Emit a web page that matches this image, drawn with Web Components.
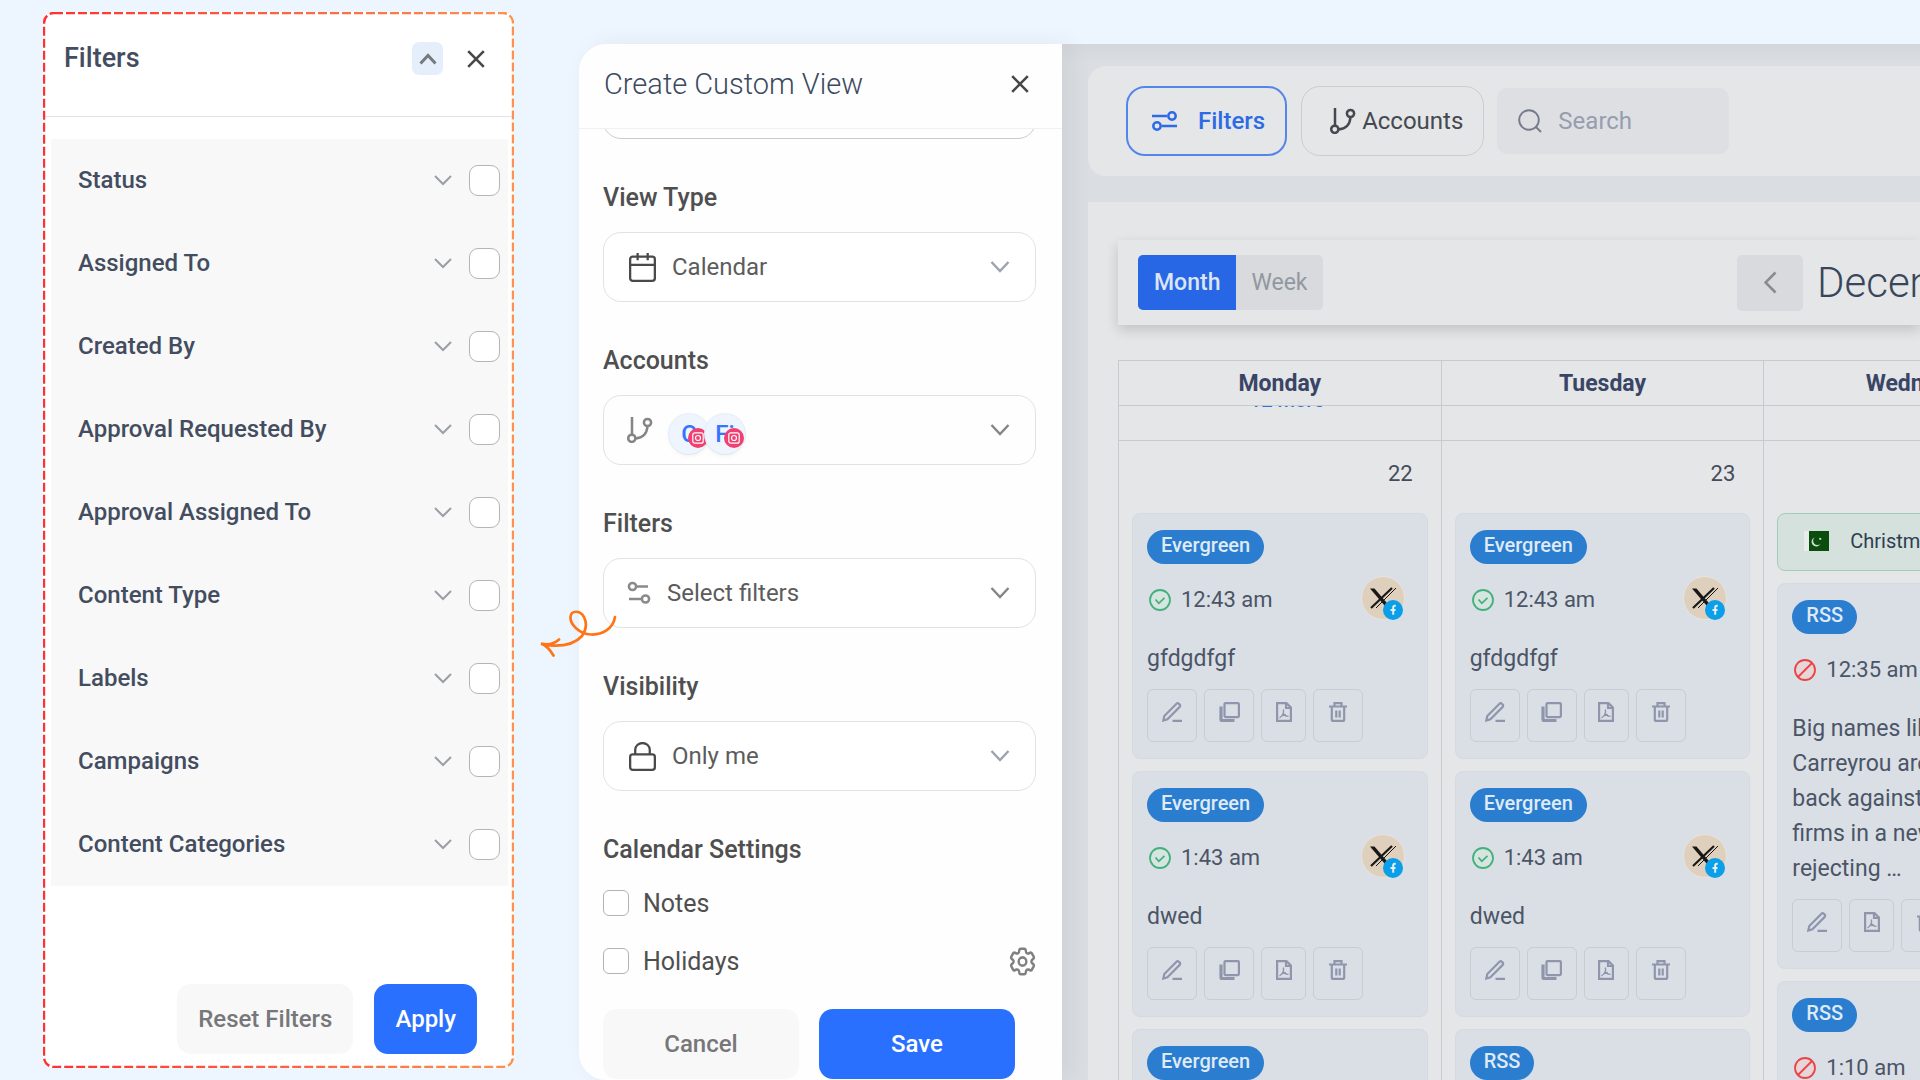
<!DOCTYPE html>
<html lang="en">
<head>
<meta charset="utf-8">
<title>Create Custom View</title>
<style>
  html, body { height: 100%; }
  body { margin: 0; overflow: hidden; background: #edf5ff; font-family: Roboto, "Liberation Sans", sans-serif; color: #434d5f; }
</style>
</head>
<body>
<planner-page></planner-page>

<script>
const define = (name, html, setup) => {
  const tpl = document.createElement('template');
  tpl.innerHTML = `<style>
    *, *::before, *::after { box-sizing: border-box; }
    button, input, select { font: inherit; color: inherit; margin: 0; padding: 0; border: 0; background: none; }
    svg { display: block; flex: none; }
  </style>` + html;
  customElements.define(name, class extends HTMLElement {
    constructor() {
      super();
      this.attachShadow({ mode: 'open' }).append(tpl.content.cloneNode(true));
    }
    connectedCallback() {
      if (setup && !this.ready) { this.ready = true; setup(this, this.shadowRoot); }
    }
  });
};

/* name: [width, height, viewBox, stroke width, markup] */
const ICONS = {
  up: [18, 12, '0 0 18 12', 3, '<path d="M1.500 10.500L9 2.500l7.500 8"/>'],
  down: [18, 11, '0 0 18 11', 2, '<path d="M1 1l8 8 8-8"/>'],
  downThick: [20, 12, '0 0 20 12', 2.4, '<path d="M1.500 1l8.500 9L18.500 1"/>'],
  left: [13, 23, '0 0 13 23', 2.6, '<path d="M11.500 1.500l-10 10 10 10"/>'],
  close: [18, 18, '0 0 18 18', 2.6, '<path d="M1.200 1.200l15.600 15.600M16.800 1.200L1.200 16.800"/>'],
  calendar: [27, 29, '0 0 26 28', 2.2, '<rect x="1.100" y="3.500" width="23.800" height="23.400" rx="2.500"/><path d="M1 11.500h24M8.300 0v7M18 0v7"/>'],
  lock: [27, 29, '0 0 26 28', 2.2, '<rect x="1.100" y="12" width="23.800" height="14.900" rx="2.500"/><path d="M6 12V7.500a7 6.500 0 0 1 14 0V12"/>'],
  branch: [26, 26, '0 0 26 26', 2.5, '<path d="M5 0v17M20.500 9c-.5 7-4.500 12-12 12.500"/><circle cx="4.800" cy="21.300" r="3.600"/><circle cx="20.500" cy="5.500" r="3.600"/>'],
  sliders: [24, 24, '0 0 24 24', 2.5, '<path d="M9 5.500h12M2 18h12"/><circle cx="5.500" cy="5.500" r="3.600"/><circle cx="18.500" cy="18" r="3.600"/>'],
  slidersAlt: [25, 20, '0 0 25 20', 2.5, '<path d="M0 5h15M10 15h15"/><circle cx="20" cy="5" r="3.700"/><circle cx="5" cy="15" r="3.700"/>'],
  search: [24, 24, '0 0 24 24', 1.9, '<circle cx="11" cy="11" r="9.800"/><path d="M17.500 17.500l5.500 5.500"/>'],
  gear: [27, 29, '1.800 1.800 20.400 20.400', 1.8, '<path d="M9.594 3.940c.09-.542.56-.94 1.110-.94h2.593c.55 0 1.020.398 1.110.94l.213 1.281c.063.374.313.686.645.87.074.04.147.083.22.127.324.196.72.257 1.075.124l1.217-.456a1.125 1.125 0 011.370.49l1.296 2.247a1.125 1.125 0 01-.26 1.431l-1.003.827c-.293.24-.438.613-.431.992a6.759 6.759 0 010 .255c-.007.378.138.75.43.99l1.005.828c.424.35.534.954.26 1.430l-1.298 2.247a1.125 1.125 0 01-1.369.491l-1.217-.456c-.355-.133-.75-.072-1.076.124a6.570 6.570 0 01-.22.128c-.331.183-.581.495-.644.869l-.213 1.280c-.09.543-.56.941-1.110.941h-2.594c-.55 0-1.020-.398-1.110-.94l-.213-1.281c-.062-.374-.312-.686-.644-.87a6.520 6.520 0 01-.22-.127c-.325-.196-.72-.257-1.076-.124l-1.217.456a1.125 1.125 0 01-1.369-.49l-1.297-2.247a1.125 1.125 0 01.26-1.431l1.004-.827c.292-.24.437-.613.43-.992a6.932 6.932 0 010-.255c.007-.378-.138-.75-.43-.99l-1.004-.828a1.125 1.125 0 01-.26-1.430l1.297-2.247a1.125 1.125 0 011.370-.491l1.216.456c.356.133.751.072 1.076-.124.072-.044.146-.087.22-.128.332-.183.582-.495.644-.869l.214-1.281z"/><circle cx="12" cy="12" r="2.900"/>'],
  edit: [20, 20, '0 0 20 20', 2.2, '<path d="M1.300 18.500l1-4.500L14.500 1.700a1.600 1.600 0 0 1 2.300 0l.9.9a1.600 1.600 0 0 1 0 2.300L5.400 17.200zM10.500 18.800H20"/>'],
  copy: [21, 20, '0 0 21 20', 2.2, '<rect x="5.500" y="1.100" width="14.400" height="14" rx="1"/><path d="M2 4.500v13.200q0 .8.800.8h12.700" stroke-width="3.200"/>'],
  pdf: [16, 20, '0 0 16 20', 2.2, '<path d="M1.100 1.100h9.400l4.400 4.400v13.400H1.100z"/><path d="M10 1v5h5"/><path d="M7.300 7.500c1 3.500-1 6.500-3.800 8.500M7.500 12c1.500 2 3 2.500 5 2.300M5.500 13.700l4.500-.9" stroke-width="1.400"/>'],
  trash: [18, 20, '0 0 18 20', 2.2, '<path d="M0 4.500h18M5.500 4V1.100h7V4M2.800 5v12.400q0 1.500 1.500 1.500h9.400q1.500 0 1.500-1.500V5M7.300 8.500v7M10.700 8.500v7"/>'],
  ok: [22, 22, '0 0 22 22', 1.8, '<circle cx="11" cy="11" r="10" fill="#d6e5df"/><path d="M6.500 10.500l3.300 3.800 5.700-5.500"/>'],
  failed: [22, 22, '0 0 22 22', 1.8, '<circle cx="11" cy="11" r="10" fill="#e6d6d9"/><path d="M4 18L18 4"/>'],
  flag: [25, 20, '0 0 25 20', 0, '<path fill="#e9ecea" d="M0 0h5v20H0z"/><path fill="#0b4d0d" d="M5 0h20v20H5z"/><path fill="#cfdccf" d="M10.500 6.500a4.700 4.700 0 1 0 6 6.300 4.300 4.300 0 0 1-6-6.300zM15.500 6.800l1.500.3.500 1.200-1.200.8-1.300-.8z"/>'],
  arrow: [78, 48, '0 0 78 48', 2.7, '<path stroke-linecap="round" d="M76 8c-2 12-13 18-24 17.500C40 25 31 15 31.500 8 32 1 41 1 45 8c3 6 2 13-2 19C35 36 21 38 5 36M20 30.500C15 35 8 36 2 34.500c5 2 9 6 12.500 12"/>'],
};

define('ui-icon', `<style>:host { display: block; flex: none; }</style><div></div>`, (el, root) => {
  const [w, h, vb, sw, body] = ICONS[el.getAttribute('name')];
  root.querySelector('div').innerHTML =
    `<svg width="${w}" height="${h}" viewBox="${vb}" preserveAspectRatio="none" fill="none" stroke="currentColor" stroke-width="${sw}" aria-hidden="true">${body}</svg>`;
});

define('ui-button', `<style>
  :host { display: block; --bg: #f8f8f8; --fg: #77777a; }
  :host([primary]) { --bg: #2a70ff; --fg: #fff; }
  button { width: 100%; height: 70px; padding: 0 21px; border-radius: 14px; background: var(--bg); color: var(--fg); font-size: 24px; font-weight: 500; white-space: nowrap; }
</style><button type="button"><slot></slot></button>`);

/* ---------- filters panel ---------- */
define('filter-row', `<style>
  :host { display: flex; align-items: center; height: 83px; padding: 0 8px 0 27px; font-size: 24px; font-weight: 500; }
  label { flex: 1; padding-bottom: 2px; }
  button { color: #9b9fa6; margin-right: 17px; }
  input { appearance: none; width: 31px; height: 31px; border: 1px solid #b5b5b5; border-radius: 9px; background: #fff; }
</style>
<label for="c"><slot></slot></label>
<button type="button" aria-label="Expand"><ui-icon name="down"></ui-icon></button>
<input id="c" type="checkbox">`);

define('filter-panel', `<style>
  :host { display: flex; flex-direction: column; position: relative; background: #fff; border-radius: 10px; }
  .frame { position: absolute; inset: 0; width: 100%; height: 100%; pointer-events: none; }
  header { display: flex; align-items: flex-start; height: 105px; padding: 30px 29px 0 21px; border-bottom: 1px solid #dde4ea; }
  h2 { flex: 1; margin: 0; font-size: 27px; line-height: 32px; font-weight: 500; }
  .up { display: grid; place-items: center; width: 31px; height: 33px; border-radius: 7px; background: #e5effc; color: #76797e; margin-right: 24px; }
  .x { height: 34px; color: #484848; }
  .list { margin: 22px 6px 0 8px; background: #f8f8f8; }
  footer { display: flex; gap: 21px; justify-content: flex-end; margin-top: auto; padding: 0 37px 14px; }
</style>
<header>
  <h2>Filters</h2>
  <button class="up" type="button" aria-label="Collapse"><ui-icon name="up"></ui-icon></button>
  <button class="x" type="button" aria-label="Close"><ui-icon name="close"></ui-icon></button>
</header>
<div class="list">
  <filter-row>Status</filter-row>
  <filter-row>Assigned To</filter-row>
  <filter-row>Created By</filter-row>
  <filter-row>Approval Requested By</filter-row>
  <filter-row>Approval Assigned To</filter-row>
  <filter-row>Content Type</filter-row>
  <filter-row>Labels</filter-row>
  <filter-row>Campaigns</filter-row>
  <filter-row>Content Categories</filter-row>
</div>
<footer><ui-button>Reset Filters</ui-button><ui-button primary>Apply</ui-button></footer>
<svg class="frame" aria-hidden="true">
  <defs><linearGradient id="g"><stop offset="0" stop-color="#ff3131"/><stop offset="1" stop-color="#ff914d"/></linearGradient></defs>
  <rect x="1" y="1" rx="10" style="width:calc(100% - 2px);height:calc(100% - 2px)" fill="none" stroke="url(#g)" stroke-width="2.400" stroke-dasharray="9 3"/>
</svg>`);

/* ---------- custom view drawer ---------- */
define('select-field', `<style>
  :host { display: block; margin-top: 45px; --icon: #4a4a4a; --chev: #9aa3ae; --gap: 16px; --pad: 25px; }
  :host([soft]) { --icon: #8a8a8a; --chev: #858585; --pad: 23px; }
  label { display: block; margin-bottom: 20px; font-size: 25px; line-height: 28px; font-weight: 500; color: #4f4f4f; }
  .box { display: flex; align-items: center; height: 70px; padding: 0 25px 0 var(--pad); border: 1px solid #e0e2e5; border-radius: 18px; background: #fff; }
  .lead { color: var(--icon); margin-right: var(--gap); }
  .chev { color: var(--chev); }
  select { flex: 1; appearance: none; height: 68px; font-size: 24px; color: #5c5c5c; }
</style>
<label for="s"></label>
<div class="box"><select id="s"><option></option></select><ui-icon class="chev" name="downThick"></ui-icon></div>`,
(el, root) => {
  root.querySelector('label').textContent = el.getAttribute('label');
  root.querySelector('option').textContent = el.getAttribute('value');
  root.querySelector('.box').insertAdjacentHTML('afterbegin', `<ui-icon class="lead" name="${el.getAttribute('icon')}"></ui-icon>`);
});

define('account-chip', `<style>
  :host { display: grid; place-items: center; position: relative; width: 40px; height: 40px; border-radius: 50%; background: #eef5ff; box-shadow: 0 2px 5px #0000000d, 0 0 0 1px #e9f0f7; color: #3474ff; font-size: 24px; font-weight: 500; }
  svg { position: absolute; right: 1px; bottom: 6px; }
</style><slot></slot>
<svg width="20" height="20" viewBox="0 0 20 20" fill="none" stroke="#fff" aria-hidden="true"><circle cx="10" cy="10" r="10" fill="#ef4071" stroke="none"/><rect x="4.800" y="4.800" width="10.400" height="10.400" rx="2" stroke-width="1.200"/><circle cx="10" cy="10" r="2.500" stroke-width="1.200"/></svg>`);

define('check-row', `<style>
  :host { display: flex; align-items: center; height: 26px; font-size: 25px; color: #4f4f4f; }
  input { appearance: none; width: 26px; height: 26px; border: 1px solid #b3b3b3; border-radius: 6px; background: #fff; }
  label { flex: 1; margin-left: 14px; }
</style><input id="c" type="checkbox"><label for="c"><slot></slot></label><slot name="end"></slot>`);

define('view-drawer', `<style>
  :host { display: flex; flex-direction: column; position: relative; z-index: 1; background: #fefefe; border-radius: 27px 0 0 27px; box-shadow: 8px 0 24px #0000000f; }
  header { display: flex; align-items: center; flex: none; height: 85px; padding: 0 33px 4px 25px; border-bottom: 1px solid #f0f1f3; }
  h1 { flex: 1; margin: 0; font-size: 29px; font-weight: 300; color: #3c4a60; }
  .x { color: #484848; }
  main { flex: 1; min-height: 0; overflow: hidden; padding: 0 26px 0 24px; }
  .name { display: block; width: 100%; height: 70px; margin-top: -60px; border: 1px solid #cbcbcb; border-radius: 18px; }
  .label { margin: 45px 0 20px; font-size: 25px; line-height: 28px; font-weight: 500; color: #4f4f4f; }
  .accounts { display: flex; align-items: center; width: 100%; height: 70px; padding: 0 25px 0 23px; border: 1px solid #e0e2e5; border-radius: 18px; color: #858585; }
  .chips { display: flex; flex: 1; margin-left: 16px; padding-top: 7px; }
  account-chip + account-chip { margin-left: -4px; }
  .settings { display: grid; gap: 32px; margin-top: 26px; }
  .gear { color: #808080; margin: -2px 0; }
  footer { display: grid; grid-template-columns: 1fr 1fr; gap: 20px; padding: 0 47px 1px 24px; }
  .arrow { position: absolute; left: -40px; top: 565px; color: #ff7417; }
</style>
<header><h1>Create Custom View</h1><button class="x" type="button" aria-label="Close"><ui-icon name="close"></ui-icon></button></header>
<main>
  <input class="name" type="text" aria-label="View name">
  <select-field label="View Type" value="Calendar" icon="calendar"></select-field>
  <div class="label" id="acc">Accounts</div>
  <button class="accounts" type="button" aria-labelledby="acc">
    <ui-icon name="branch"></ui-icon>
    <span class="chips"><account-chip>C</account-chip><account-chip>Fi</account-chip></span>
    <ui-icon name="downThick"></ui-icon>
  </button>
  <select-field soft label="Filters" value="Select filters" icon="sliders"></select-field>
  <select-field label="Visibility" value="Only me" icon="lock"></select-field>
  <div class="label">Calendar Settings</div>
  <div class="settings">
    <check-row>Notes</check-row>
    <check-row>Holidays<button slot="end" class="gear" type="button" aria-label="Holiday settings"><ui-icon name="gear"></ui-icon></button></check-row>
  </div>
</main>
<footer><ui-button>Cancel</ui-button><ui-button primary>Save</ui-button></footer>
<ui-icon class="arrow" name="arrow"></ui-icon>`);

/* ---------- calendar ---------- */
define('post-card', `<style>
  :host { display: block; margin-bottom: 12px; padding: 16px 13px 16px 14px; border: 1px solid #d5dae2; border-radius: 8px; background: #dadfe6; text-align: left; color: #4b5566; }
  .badge { display: block; width: fit-content; height: 34px; padding: 0 14px; border-radius: 17px; background: #2a7dcf; color: #dfeaf5; font-size: 20px; line-height: 31px; font-weight: 500; }
  .meta { display: flex; align-items: center; height: 47px; margin: 12px 0 18px; padding: 0 9px 0 2px; }
  .meta svg { align-self: flex-start; }
  time { flex: 1; margin-left: 10px; font-size: 22px; }
  p { margin: 0 0 13px; font-size: 23px; line-height: 35px; white-space: pre-line; }
  .tools { display: flex; gap: 7px; }
  .tools button { display: grid; place-items: center; width: 50px; height: 53px; padding-bottom: 8px; border: 1px solid #c9ccd1; border-radius: 6px; color: #9095ac; }
  .tools .slim { width: 45px; }
  .ok { color: #44b07c; } .failed { color: #ea4444; }
</style>
<span class="badge"></span>
<div class="meta"><time></time>
  <svg width="44" height="44" viewBox="0 0 44 44" fill="none" aria-hidden="true">
    <circle cx="22" cy="22" r="21.500" fill="#dfd0bd" stroke="#e6e4e1"/>
    <path d="M9 12.500h4.500L31 33h-4.500z" fill="#191816"/>
    <path d="M31 12L10 32" stroke="#191816" stroke-width="2.200"/>
    <path d="M35 12L15 32" stroke="#191816" stroke-width="1"/>
    <circle cx="32" cy="34" r="10" fill="#0a9fe8"/>
    <path d="M34.800 29.800h-1q-1.600 0-1.600 1.800v7.200M29.500 34h5" stroke="#e4eef5" stroke-width="2"/>
  </svg>
</div>
<p></p><div class="tools"></div>`, (el, root) => {
  const state = el.getAttribute('state') || 'ok';
  root.querySelector('.badge').textContent = el.getAttribute('kind');
  root.querySelector('time').textContent = el.getAttribute('time');
  root.querySelector('.meta').insertAdjacentHTML('afterbegin', `<ui-icon class="${state}" name="${state}"></ui-icon>`);
  root.querySelector('p').textContent = el.getAttribute('text').split('|').join('\n');
  const tools = state === 'ok' ? ['edit', 'copy', 'pdf', 'trash'] : ['edit', 'pdf', 'trash'];
  root.querySelector('.tools').innerHTML = tools.map(t =>
    `<button type="button" class="${t === 'pdf' ? 'slim' : ''}" aria-label="${t}"><ui-icon name="${t}"></ui-icon></button>`).join('');
});

define('top-bar', `<style>
  :host { display: flex; align-items: center; height: 110px; padding: 0 0 0 38px; border-radius: 18px 0 0 18px; background: #e4e6e8; font-size: 24px; }
  button { display: flex; align-items: center; height: 70px; padding: 0 20px 0 24px; border: 1px solid #cbcdd0; border-radius: 19px; }
  .filters { gap: 21px; border: 2px solid #5585ea; color: #2d6be6; font-weight: 500; margin-right: 14px; }
  .accounts { gap: 6px; padding-left: 28px; color: #45494f; margin-right: 13px; }
  .search { display: flex; align-items: center; gap: 16px; width: 232px; height: 66px; padding: 0 21px; border-radius: 10px; background: #dddfe3; color: #757b88; }
  input { flex: 1; min-width: 0; outline: 0; }
  input::placeholder { color: #969dae; opacity: 1; }
</style>
<button class="filters" type="button"><ui-icon name="slidersAlt"></ui-icon>Filters</button>
<button class="accounts" type="button"><ui-icon name="branch"></ui-icon>Accounts</button>
<label class="search"><ui-icon name="search"></ui-icon><input type="search" placeholder="Search" aria-label="Search"></label>`);

define('month-bar', `<style>
  :host { display: grid; grid-template-columns: 1fr 183px; align-items: center; height: 85px; padding-left: 20px; background: #e4e6e8; box-shadow: 0 5px 12px #00000028; }
  .modes { display: flex; font-size: 23px; }
  .modes button { height: 55px; padding: 0 15px; color: #9298a0; background: #d8dadd; border-radius: 0 5px 5px 0; }
  .modes .on { padding: 0 16px; color: #dce5f5; background: #2766e4; font-weight: 500; border-radius: 5px 0 0 5px; }
  .nav { display: flex; align-items: center; gap: 14px; white-space: nowrap; font-size: 42px; font-weight: 300; color: #39465a; }
  .nav button { display: grid; place-items: center; flex: none; width: 66px; height: 56px; border-radius: 5px; background: #d8dadd; color: #868c94; }
</style>
<div class="modes"><button class="on" type="button">Month</button><button type="button">Week</button></div>
<div class="nav"><button type="button" aria-label="Previous month"><ui-icon name="left"></ui-icon></button><span>December</span></div>`);

define('month-table', `<style>
  :host { display: block; }
  table { width: 969px; table-layout: fixed; border-collapse: collapse; }
  th, td { padding: 0; border: 1px solid #c8cacd; vertical-align: top; }
  th { height: 45px; font-size: 23px; font-weight: 700; color: #3a4566; vertical-align: middle; }
  .prev td { height: 34px; }
  .clip { height: 34px; overflow: hidden; text-align: center; }
  .clip a { display: block; margin-top: -20px; padding-left: 14px; line-height: 28px; font-size: 20px; font-weight: 500; color: #2b72d8; text-decoration: none; }
  .day { padding: 0 13px; }
  .num { height: 72px; padding-right: 15px; line-height: 66px; text-align: right; font-size: 22px; color: #444c59; }
  .holiday { display: flex; align-items: center; gap: 21px; height: 58px; margin-bottom: 12px; padding: 0 0 2px 26px; border: 1px solid #a5cdb6; border-radius: 8px; background: #d5e1dc; font-size: 20px; color: #2f3d52; white-space: nowrap; }
</style>
<table>
  <thead><tr><th>Monday</th><th>Tuesday</th><th>Wednesday</th></tr></thead>
  <tbody>
    <tr class="prev"><td><div class="clip"><a href="#">12 more</a></div></td><td></td><td></td></tr>
    <tr>
      <td class="day"><div class="num">22</div>
        <post-card kind="Evergreen" time="12:43 am" text="gfdgdfgf"></post-card>
        <post-card kind="Evergreen" time="1:43 am" text="dwed"></post-card>
        <post-card kind="Evergreen" time="2:43 am" text="gfdgdfgf"></post-card>
      </td>
      <td class="day"><div class="num">23</div>
        <post-card kind="Evergreen" time="12:43 am" text="gfdgdfgf"></post-card>
        <post-card kind="Evergreen" time="1:43 am" text="dwed"></post-card>
        <post-card kind="RSS" time="2:43 am" text="dwed"></post-card>
      </td>
      <td class="day"><div class="num">24</div>
        <div class="holiday"><ui-icon name="flag"></ui-icon>Christmas</div>
        <post-card state="failed" kind="RSS" time="12:35 am" text="Big names like John|Carreyrou are pushing|back against some|firms in a new lawsuit|rejecting …"></post-card>
        <post-card state="failed" kind="RSS" time="1:10 am" text="Big names like John"></post-card>
      </td>
    </tr>
  </tbody>
</table>`);

define('calendar-area', `<style>
  :host { display: block; min-width: 0; overflow: hidden; padding: 22px 0 0 26px; background: linear-gradient(#d3d6da, #dadee2 18px, #dadee3 120px); }
  section { margin-top: 26px; padding: 38px 0 0 30px; background: #e4e6e8; min-height: 100%; }
  month-table { margin-top: 35px; }
</style>
<top-bar></top-bar>
<section><month-bar></month-bar><month-table></month-table></section>`);

define('planner-page', `<style>
  :host { display: flex; height: 100vh; overflow: hidden; }
  filter-panel { flex: 0 0 471px; margin: 12px 65px 12px 43px; }
  .work { display: grid; grid-template-columns: 483px minmax(0, 1fr); flex: 1; min-width: 0; margin-top: 44px; }
</style>
<filter-panel></filter-panel>
<div class="work"><view-drawer></view-drawer><calendar-area></calendar-area></div>`);
</script>
</body>
</html>
